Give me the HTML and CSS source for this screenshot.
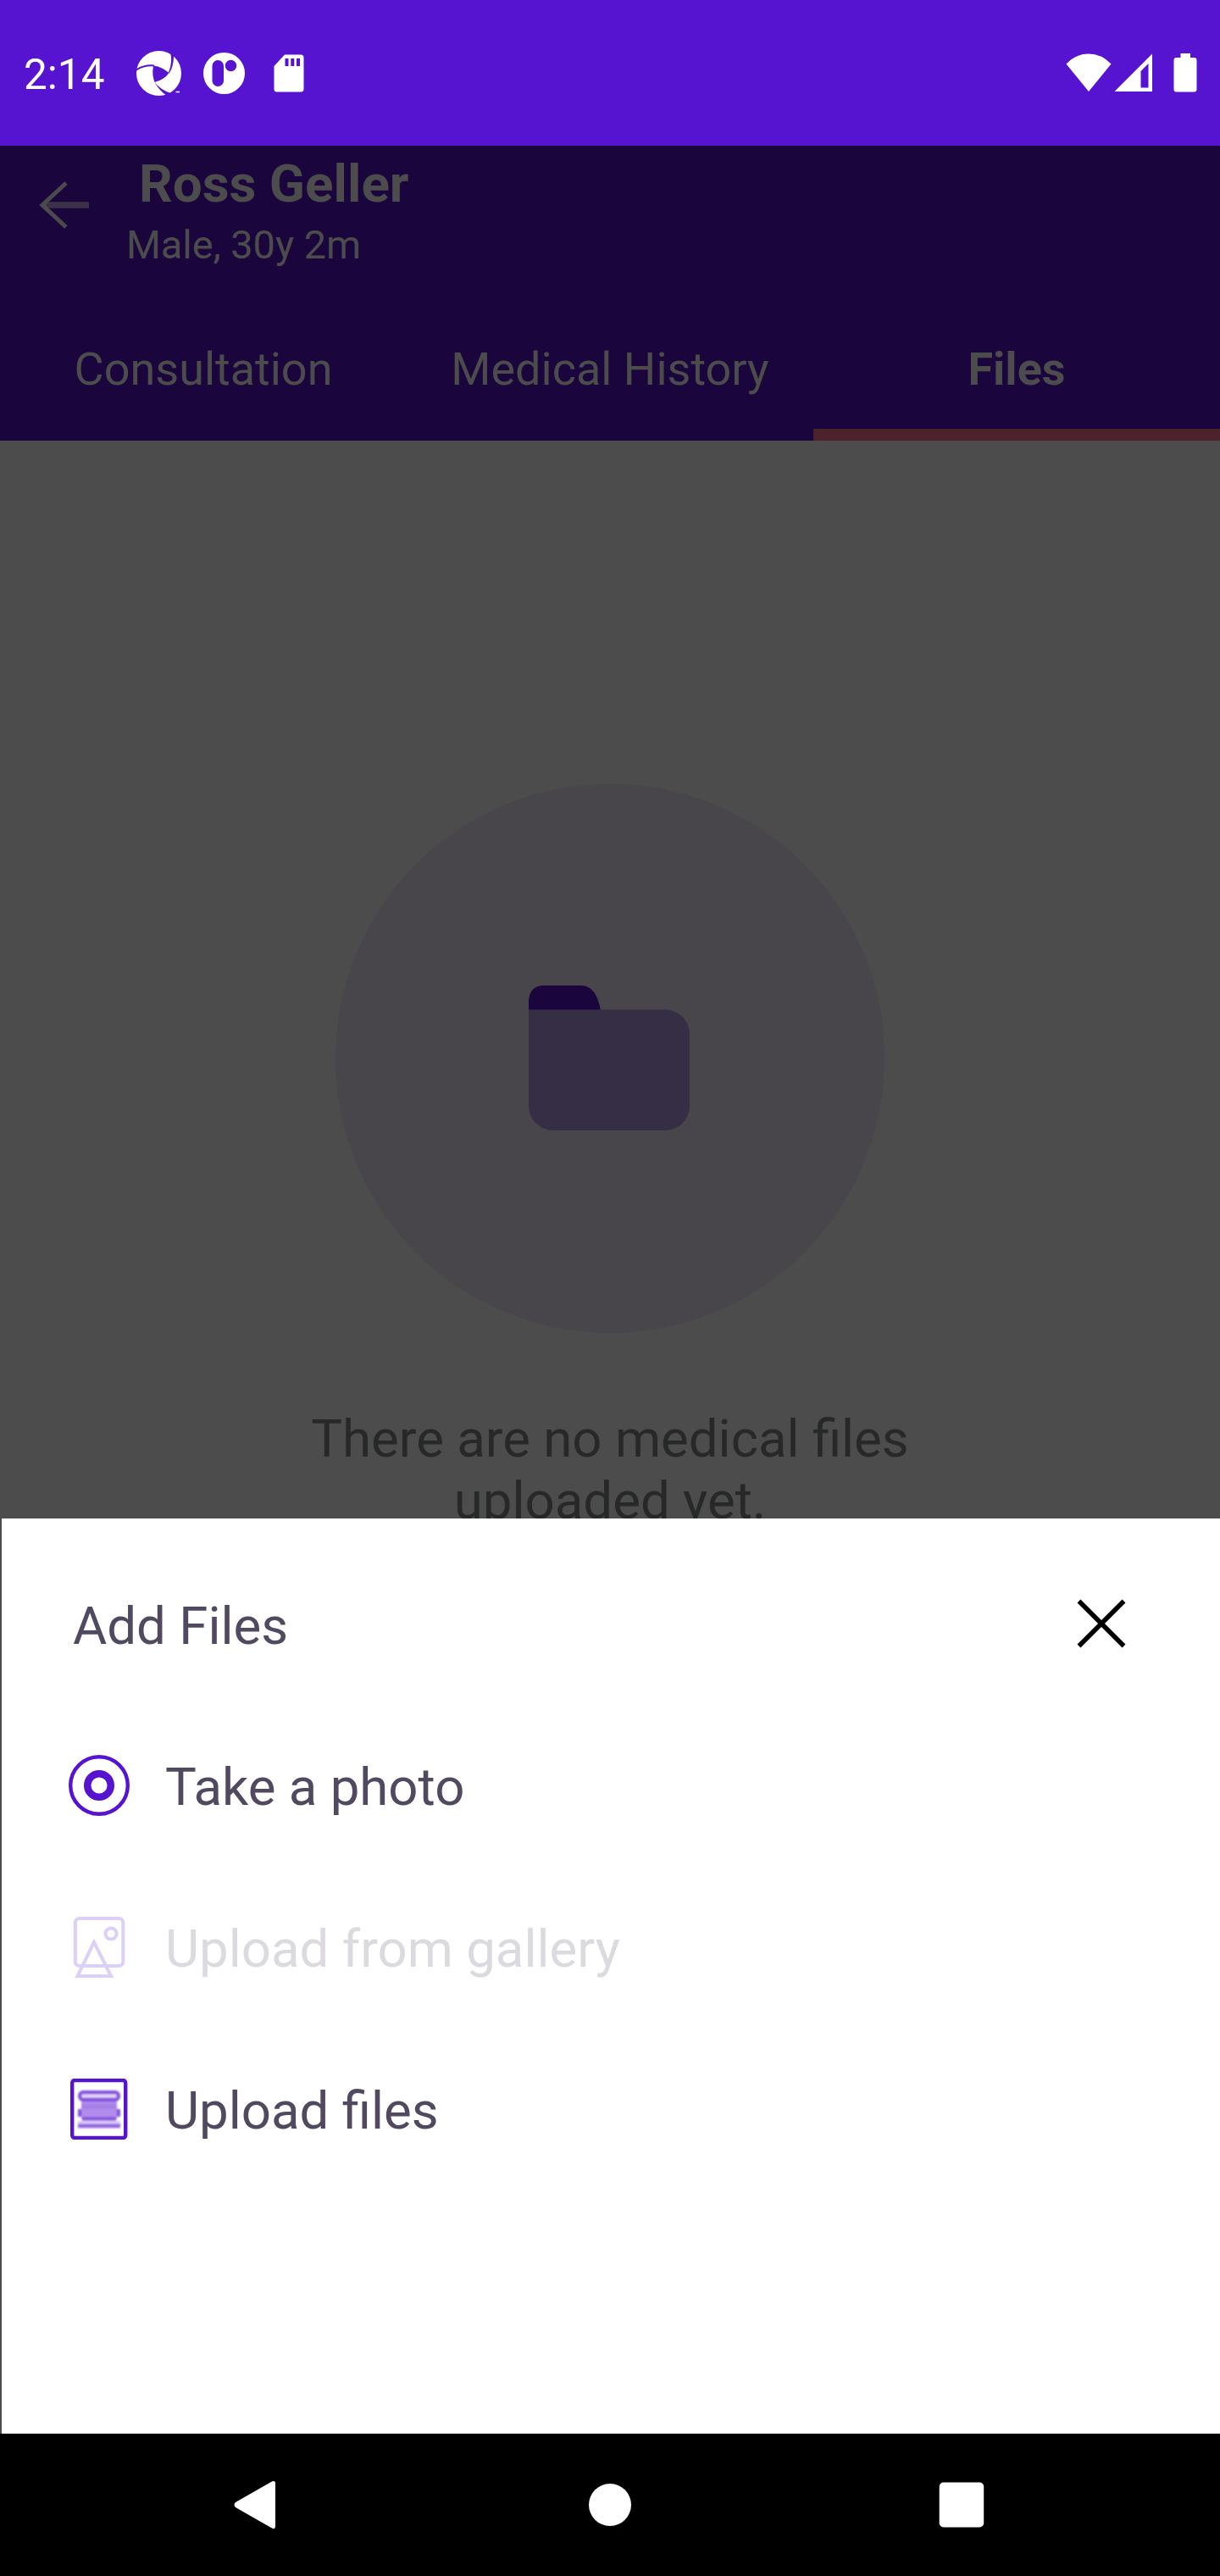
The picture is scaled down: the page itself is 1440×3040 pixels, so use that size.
FILE: index.html
```html
<!DOCTYPE html>
<html lang="en">
<head>
<meta charset="utf-8">
<title>Patient files</title>
<link rel="stylesheet" href="styles.css">
</head>
<body>
<div class="screen">
  <div class="status">
    <span class="time">2:14</span>
    <svg class="aperture" width="54" height="54" viewBox="0 0 54 54">
      <circle cx="26.500" cy="26.500" r="26.500" fill="#fff"/>
      <path d="M20 17.500Q29 18 38.500 26Q33 34 21.500 37Q18 28 20 17.500Z" fill="#5614d0"/>
      <path d="M0 22.500Q9 16.500 21 17.500" fill="none" stroke="#5614d0" stroke-width="2"/>
      <path d="M40 2L44 7Q44 18 38.500 27L38 25.500Q43 13 40 2Z" fill="#5614d0"/>
      <path d="M39.500 0L46 3L43.500 8Z" fill="#5614d0"/>
      <path d="M21.500 37Q28 46 42 50.500L36 53Q27 47 21.500 37Z" fill="#5614d0"/>
      <path d="M46.500 48.500H51" stroke="#fff" stroke-width="1.500"/>
    </svg>
    <svg class="rapp" width="50" height="50" viewBox="0 0 50 50">
      <circle cx="24.500" cy="24.500" r="24.500" fill="#fff"/>
      <rect x="10.500" y="9" width="13.500" height="31" rx="6.750" fill="#5614d0"/>
      <circle cx="32.500" cy="15.500" r="6.750" fill="#5614d0"/>
    </svg>
    <svg class="sd" width="36" height="46" viewBox="0 0 36 46">
      <path d="M13 .5H32Q35.500 .5 35.500 4V41Q35.500 44.500 32 44.500H4Q.5 44.500 .5 41V14Z" fill="#fff"/>
      <path d="M13.500 5h4v9h-4zM20.300 5h4v9h-4zM27 5h4v9h-4z" fill="#5614d0"/>
    </svg>
    <span class="spacer"></span>
    <svg class="wifi" width="54" height="46" viewBox="0 0 54 46"><path d="M.5 12.500Q12 .5 27 .5T53.500 12.500L27 45Z" fill="#fff"/></svg>
    <svg class="signal" width="46" height="46" viewBox="0 0 46 46"><path d="M45 .5V45H.5ZM40.500 12L31.500 21V40.500H40.500Z" fill="#fff" fill-rule="evenodd"/></svg>
    <svg class="battery" width="28" height="46" viewBox="0 0 28 46"><path d="M8.500 0H20V5H24.500Q27.500 5 27.500 8V42.500Q27.500 45.500 24.500 45.500H3.500Q.5 45.500 .5 42.500V8Q.5 5 3.500 5H8.500Z" fill="#fff"/></svg>
  </div>

  <div class="header">
    <div class="patient">
      <svg class="back" width="62" height="60" viewBox="0 0 62 60">
        <path d="M8 30H60" stroke="#3c3248" stroke-width="7.500"/>
        <path d="M33 4L5 30L33 56" fill="none" stroke="#4c4a4c" stroke-width="5"/>
      </svg>
      <div class="who">
        <div class="name">Ross Geller</div>
        <div class="meta">Male, 30y 2m</div>
      </div>
    </div>
    <div class="tabs">
      <div class="tab">Consultation</div>
      <div class="tab">Medical History</div>
      <div class="tab active">Files</div>
    </div>
  </div>

  <div class="content">
    <div class="disc">
      <svg width="192" height="172" viewBox="0 0 192 172">
        <path d="M0 30V17Q2 0 18 0H62Q80 0 85 30Z" fill="#1a053d"/>
        <path d="M0 28.500H161A29 29 0 0 1 190 57.500V142A29 29 0 0 1 161 171H29A29 29 0 0 1 0 142Z" fill="#362e45"/>
      </svg>
    </div>
    <p class="empty">There are no medical files<br>uploaded yet.</p>
  </div>

  <div class="sheet">
    <div class="sheet-head">
      <span class="label">Add Files</span>
      <svg width="58" height="60" viewBox="0 0 58 60"><path d="M2.500 3.500L55.500 56.500M55.500 3.500L2.500 56.500" stroke="#000" stroke-width="5.500"/></svg>
    </div>
    <div class="row">
      <svg width="72" height="72" viewBox="0 0 72 72" fill="none" stroke="#5614d0">
        <circle cx="36" cy="36" r="33.800" stroke-width="4.400"/>
        <circle cx="36" cy="36" r="13.800" stroke-width="8.500"/>
      </svg>
      <span class="label">Take a photo</span>
    </div>
    <div class="row disabled">
      <svg width="72" height="72" viewBox="0 0 72 72" fill="none" stroke="#ddd0f6" stroke-width="4">
        <rect x="7.800" y="2" width="56.500" height="56" rx="5"/>
        <circle cx="50" cy="20" r="6.600"/>
        <path d="M30 30L10.500 70H50Z"/>
      </svg>
      <span class="label">Upload from gallery</span>
    </div>
    <div class="row">
      <svg width="72" height="72" viewBox="0 0 72 72" fill="none" stroke="#5614d0">
        <rect x="4.200" y="2" width="63" height="68" rx="3" stroke-width="4.400"/>
        <g class="soft">
          <rect x="15" y="24" width="42" height="24" fill="#b08ceb" stroke="none"/>
          <rect x="13" y="16" width="46" height="9" rx="4" fill="#ddd0f6" stroke="#8552dd" stroke-width="4"/>
          <path d="M15 33H57" stroke="#a67de8" stroke-width="5"/>
          <path d="M13 36V45M59 36V45M16 47.500H56" stroke="#8552dd" stroke-width="4"/>
          <path d="M11 52H61" stroke="#d8c8f6" stroke-width="4"/>
          <path d="M11 56H61" stroke="#9366e2" stroke-width="4.500"/>
        </g>
      </svg>
      <span class="label">Upload files</span>
    </div>
  </div>

  <div class="nav">
    <svg width="50" height="58" viewBox="0 0 50 58"><path d="M44 2Q49 -1 49 4V54Q49 59 44 56L2 32Q-1 29 2 26Z" fill="#fff"/></svg>
    <svg class="home" width="50" height="50" viewBox="0 0 50 50"><circle cx="25" cy="25" r="25" fill="#fff"/></svg>
    <svg width="54" height="54" viewBox="0 0 54 54"><rect x=".7" y=".5" width="52.500" height="53" rx="5" fill="#fff"/></svg>
  </div>
</div>
</body>
</html>
```
FILE: styles.css
```css
* { box-sizing: border-box; }
body { margin: 0; font-family: Roboto, "Liberation Sans", sans-serif; }
svg { display: block; flex: none; }
.screen { width: 1440px; height: 3040px; display: flex; flex-direction: column; overflow: hidden; background: #4c4c4c; }

.status { height: 172px; flex: none; display: flex; align-items: flex-start; padding: 60px 27px 0 28px; background: #5614d0; color: #fff; }
.time { width: 133px; margin-top: -1px; font-size: 49.5px; line-height: 58px; }
.rapp { margin: 2px 0 0 25px; }
.sd { margin: 4px 0 0 33px; }
.spacer { flex: 1; }
.wifi { margin-top: 3px; }
.signal { margin: 3px 0 0 3px; }
.battery { margin: 3px 0 0 24px; }

.header { height: 348px; flex: none; background: #1a053d; color: #4c4c4c; }
.patient { height: 178px; display: flex; padding-left: 45px; }
.back { margin-top: 40px; }
.who { margin-left: 42px; padding-top: 7px; }
.name { padding-left: 15px; font-size: 62px; line-height: 76px; font-weight: 700; }
.meta { padding-top: 6px; font-size: 46.8px; line-height: 56px; }
.tabs { height: 170px; display: grid; grid-template-columns: repeat(3, 1fr); font-size: 54px; line-height: 172px; text-align: center; }
.tab { height: 170px; }
.active { font-weight: 700; background: linear-gradient(#4c222d, #4c222d) bottom / 100% 14px no-repeat; }

.content { height: 1272px; flex: none; display: flex; flex-direction: column; align-items: center; overflow: hidden; padding-top: 405px; }
.disc { width: 648px; height: 648px; flex: none; border-radius: 50%; background: #48454b; display: flex; align-items: center; justify-content: center; }
.empty { margin: 89px 0 0; font-size: 61.75px; line-height: 73px; color: #272828; text-align: center; white-space: nowrap; }

.sheet { height: 1080px; flex: none; margin-left: 2px; padding: 29px 0 0 79px; background: #fff; color: #51495f; font-size: 61.75px; line-height: 74px; }
.sheet-head { height: 190px; display: flex; align-items: center; justify-content: space-between; padding: 0 111px 0 5px; }
.label { padding-top: 5px; white-space: nowrap; }
.row { height: 191px; display: flex; align-items: center; gap: 42px; }
.disabled { color: #dcdadf; }
.soft { filter: blur(1px); }

.nav { height: 168px; flex: none; display: flex; align-items: center; justify-content: space-between; padding: 0 278px 0 276px; background: #000; }
.home { margin-left: 6px; }
```
